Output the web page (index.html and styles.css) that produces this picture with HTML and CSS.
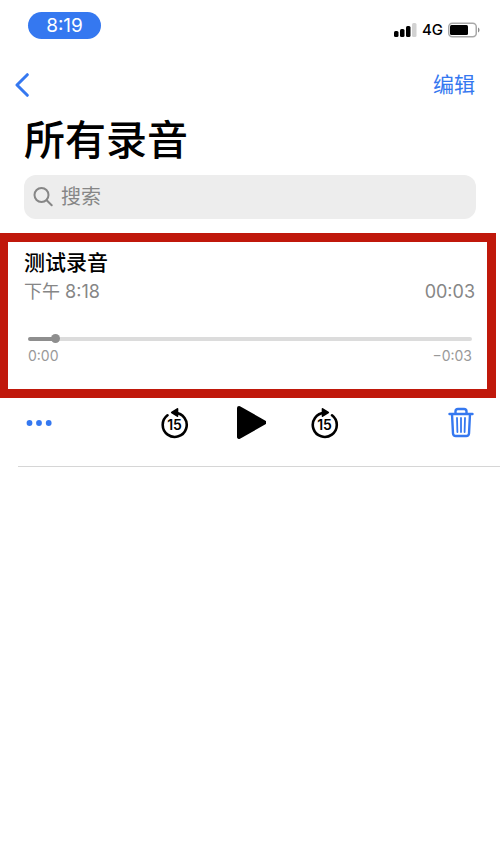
FILE: index.html
```html
<!DOCTYPE html>
<html lang="zh-CN">
<head>
<meta charset="utf-8">
<meta name="viewport" content="width=device-width, initial-scale=1">
<title>所有录音</title>
<link rel="stylesheet" href="styles.css">
</head>
<body>
<div class="status-bar">
  <time class="clock">8:19</time>
  <div class="status-icons">
    <svg class="signal" viewBox="0 0 23 14" aria-hidden="true">
      <rect x="0" y="8" width="4.500" height="6" rx="1.500"/>
      <rect x="6" y="6" width="4.500" height="8" rx="1.500"/>
      <rect x="12" y="3" width="4.500" height="11" rx="1.500"/>
      <rect class="signal-off" x="18" y="0" width="4.500" height="14" rx="1.500"/>
    </svg>
    <span class="network">4G</span>
    <svg class="battery" viewBox="0 0 32 16" aria-hidden="true">
      <rect class="battery-shell" x="0.750" y="1.250" width="27.500" height="13.500" rx="3.500"/>
      <rect x="2" y="3" width="18" height="10" rx="1.500"/>
      <path class="battery-tip" d="M30 5.500c2 .8 2 4.200 0 5z"/>
    </svg>
  </div>
</div>

<nav class="nav-bar">
  <button class="icon-button" type="button" aria-label="返回">
    <svg class="chevron" viewBox="0 0 14 24" aria-hidden="true"><path d="M12.300 1.700 2 12l10.300 10.300"/></svg>
  </button>
  <button class="edit-button" type="button">编辑</button>
</nav>

<main>
  <header class="page-header">
    <h1>所有录音</h1>
    <label class="search">
      <svg class="search-icon" viewBox="0 0 20 20" aria-hidden="true"><circle cx="8.500" cy="8" r="7"/><path d="m13.700 13.200 5 5"/></svg>
      <input type="search" placeholder="搜索" aria-label="搜索">
    </label>
  </header>

  <article class="recording">
    <h2>测试录音</h2>
    <div class="meta">
      <span>下午 8:18</span>
      <span>00:03</span>
    </div>
    <div class="player">
      <input class="progress" type="range" min="0" max="1000" value="54" aria-label="播放进度">
      <div class="times">
        <span>0:00</span>
        <span>−0:03</span>
      </div>
    </div>
  </article>

  <div class="controls">
    <button class="icon-button" type="button" aria-label="更多">
      <svg class="more" viewBox="0 0 28 32" aria-hidden="true"><circle cx="4.500" cy="16" r="2.900"/><circle cx="14" cy="16" r="2.900"/><circle cx="23.700" cy="16" r="2.900"/></svg>
    </button>
    <div class="transport">
      <button class="icon-button" type="button" aria-label="后退 15 秒">
        <svg class="skip" viewBox="0 0 28 32" aria-hidden="true">
          <path class="skip-ring" d="M6.500 8.300A12 12 0 1 0 14 5.900"/>
          <path d="M10.300 4.700 16 1.300q1.300-.6 1.300.7v7q0 1.300-1.300.7L10.300 6.300q-1-.8 0-1.600z"/>
          <text x="13.500" y="23">15</text>
        </svg>
      </button>
      <button class="icon-button" type="button" aria-label="播放">
        <svg class="play" viewBox="0 0 32 36" aria-hidden="true"><path d="M5 3 30.500 17.500 5 32z"/></svg>
      </button>
      <button class="icon-button" type="button" aria-label="前进 15 秒">
        <svg class="skip" viewBox="0 0 28 32" aria-hidden="true">
          <path class="skip-ring" d="M21 8.300A12 12 0 1 1 13.500 5.900"/>
          <path d="M17.700 4.700 12 1.300q-1.300-.6-1.300.7v7q0 1.300 1.300.7L17.700 6.300q1-.8 0-1.600z"/>
          <text x="13.500" y="23">15</text>
        </svg>
      </button>
    </div>
    <button class="icon-button trash-button" type="button" aria-label="删除">
      <svg class="trash" viewBox="0 0 26 32" aria-hidden="true">
        <path d="M1.500 7h23M7.500 6V4.500Q7.500 2 10 2h6q2.500 0 2.500 2.500V6M4 7l1 19.500q.2 2.500 2.700 2.500h10.600q2.500 0 2.700-2.500L22 7"/>
        <path class="trash-bars" d="m9 11 .4 14M13 11v14M17 11l-.4 14"/>
      </svg>
    </button>
  </div>
</main>
</body>
</html>
```
FILE: styles.css
```css
:root {
  --blue: #3578f0;
  --gray: #868686;
  --red: #c0180b;
}

* {
  box-sizing: border-box;
}

body {
  margin: 0;
  background: #fff;
  color: #000;
  font-family: Inter, "Noto Sans CJK SC", sans-serif;
}

button {
  padding: 0;
  border: 0;
  background: none;
  color: var(--blue);
  font: inherit;
}

svg {
  display: block;
}

.icon-button {
  display: flex;
}

.status-bar {
  display: flex;
  justify-content: space-between;
  align-items: flex-start;
  padding: 12px 20px 0 28px;
}

.clock {
  width: 73px;
  border-radius: 14px;
  background: var(--blue);
  color: #fff;
  font-size: 19px;
  line-height: 27px;
  text-align: center;
}

.status-icons {
  display: flex;
  align-items: center;
  gap: 5px;
  padding-top: 10px;
}

.signal {
  width: 23px;
  height: 14px;
}

.signal-off {
  fill: #d2d2d2;
}

.network {
  font-size: 15px;
  font-weight: 500;
  line-height: 16px;
}

.battery {
  width: 32px;
  height: 16px;
}

.battery-shell {
  fill: none;
  stroke: #a8a8a8;
  stroke-width: 1.5;
}

.battery-tip {
  fill: #8c8c8c;
}

.nav-bar {
  display: flex;
  justify-content: space-between;
  align-items: center;
  height: 60px;
  margin-top: 16px;
  padding: 0 25px 0 15px;
}

.chevron {
  width: 14px;
  height: 24px;
  fill: none;
  stroke: var(--blue);
  stroke-width: 3;
  stroke-linecap: round;
  stroke-linejoin: round;
}

.edit-button {
  font-size: 21px;
  line-height: 30px;
}

.page-header {
  padding: 0 24px;
}

h1 {
  margin: 0;
  font-size: 41px;
  font-weight: 500;
  line-height: 50px;
}

.search {
  display: flex;
  align-items: center;
  gap: 8px;
  height: 44px;
  margin-top: 10px;
  padding: 0 9px;
  border-radius: 12px;
  background: #ededed;
}

.search-icon {
  flex: none;
  width: 20px;
  height: 20px;
  fill: none;
  stroke: var(--gray);
  stroke-width: 2;
  stroke-linecap: round;
}

.search input {
  flex: 1;
  min-width: 0;
  padding: 0;
  border: 0;
  outline: 0;
  appearance: none;
  background: none;
  font: inherit;
  font-size: 20px;
  line-height: 30px;
}

.search input::placeholder {
  color: var(--gray);
}

.recording {
  margin: 14px 4px 0 0;
  padding: 6px 12px 23px 16px;
  border: 9px solid var(--red);
  border-left-width: 8px;
}

h2 {
  margin: 0;
  font-size: 21px;
  font-weight: 500;
  line-height: 30px;
}

.meta {
  display: flex;
  justify-content: space-between;
  color: var(--gray);
  font-size: 18px;
  line-height: 28px;
}

.player {
  padding: 28px 3px 0 4px;
}

.progress {
  display: block;
  width: 100%;
  height: 9px;
  margin: 0;
  appearance: none;
  background: none;
}

.progress::-webkit-slider-runnable-track {
  height: 4px;
  border-radius: 2px;
  background: linear-gradient(to right, #8e8e8e 6%, #dcdcdc 6%);
}

.progress::-webkit-slider-thumb {
  width: 9px;
  height: 9px;
  margin-top: -3px;
  border-radius: 50%;
  appearance: none;
  background: #8e8e8e;
}

.times {
  display: flex;
  justify-content: space-between;
  padding-top: 3px;
  color: #999;
  font-size: 14px;
  line-height: 20px;
}

.controls {
  display: grid;
  grid-template-columns: 1fr auto 1fr;
  align-items: center;
  margin-left: 18px;
  padding: 7px 26px 25px 7px;
  border-bottom: 1px solid #d6d6d6;
}

.more {
  width: 28px;
  height: 32px;
  fill: var(--blue);
}

.transport {
  display: flex;
  align-items: center;
  gap: 45px;
}

.skip {
  width: 28px;
  height: 32px;
}

.skip-ring {
  fill: none;
  stroke: #000;
  stroke-width: 2.6;
  stroke-linecap: round;
}

.skip text {
  font-size: 14px;
  font-weight: 600;
  text-anchor: middle;
}

.play {
  width: 32px;
  height: 36px;
  stroke: #000;
  stroke-width: 4;
  stroke-linejoin: round;
}

.skip,
.play {
  fill: #000;
}

.trash-button {
  justify-self: end;
}

.trash {
  width: 26px;
  height: 32px;
  fill: none;
  stroke: var(--blue);
  stroke-width: 2.4;
  stroke-linecap: round;
  stroke-linejoin: round;
}

.trash-bars {
  stroke-width: 1.8;
}
```
